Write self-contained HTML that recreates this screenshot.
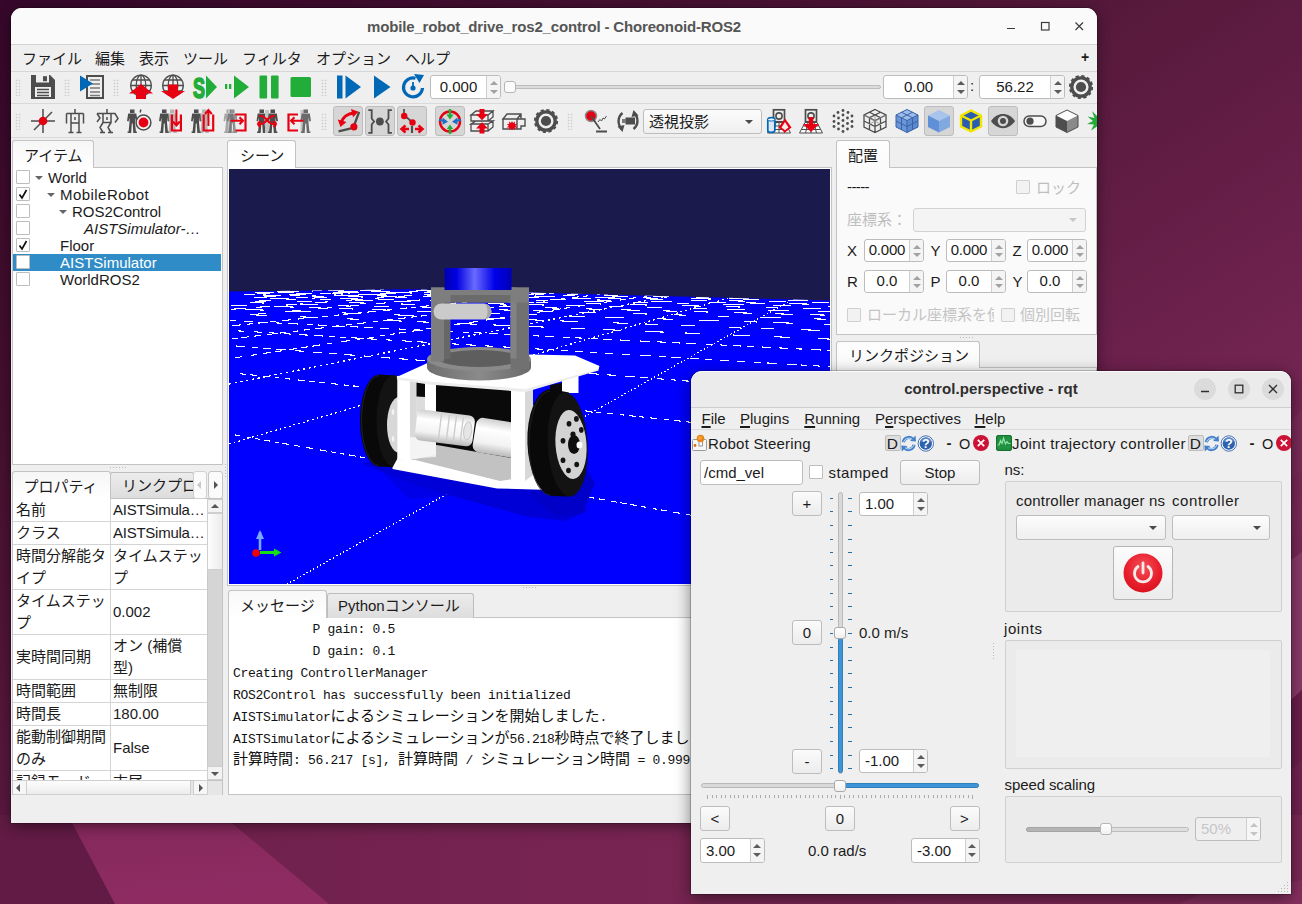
<!DOCTYPE html>
<html lang="ja"><head><meta charset="utf-8"><title>mobile_robot_drive_ros2_control - Choreonoid-ROS2</title>
<style>
*{box-sizing:border-box;margin:0;padding:0}
html,body{width:1302px;height:904px;overflow:hidden;background:#4a1535}
body{position:relative;font-family:"Liberation Sans","Noto Sans CJK JP",sans-serif;font-size:15px;color:#1b1b1b}
.a{position:absolute}
.t{position:absolute;white-space:nowrap;line-height:20px;height:20px;font-size:15px}
.j{font-family:"Liberation Sans","Noto Sans CJK JP",sans-serif}
.win{position:absolute;overflow:hidden}
.tab{position:absolute;border:1px solid #c3c3c3;border-bottom:none;border-radius:3px 3px 0 0;background:#fafafa}
.tabi{position:absolute;border:1px solid #bdbdbd;border-bottom:none;border-radius:3px 3px 0 0;background:linear-gradient(#ececec,#dddddd)}
.pane{position:absolute;border:1px solid #c3c3c3;background:#fff}
.cb{position:absolute;width:14px;height:14px;border:1px solid #bdbdbd;background:#fff;border-radius:1px}
.sp{position:absolute;border:1px solid #bcbcbc;border-radius:3px;background:#fff;overflow:hidden}
.sp .b{position:absolute;right:0;top:0;bottom:0;width:14px;border-left:1px solid #cfcfcf;background:#f4f4f4}
.sp .b:before{content:"";position:absolute;left:2.500px;top:calc(50% - 6px);border:4px solid transparent;border-top:none;border-bottom:4px solid #5c5c5c}
.sp .b:after{content:"";position:absolute;left:2.500px;top:calc(50% + 2.500px);border:4px solid transparent;border-bottom:none;border-top:4px solid #5c5c5c}
.sp.l .b:before{border-bottom-color:#a2a2a2}.sp.l .b:after{border-top-color:#a2a2a2}
.sp.d .b:before{border-bottom-color:#c4c4c4}.sp.d .b:after{border-top-color:#c4c4c4}
.sp span{position:absolute;left:0;top:0;bottom:0;right:14px;text-align:center;font-size:15px;line-height:22px;white-space:nowrap}
.btn{position:absolute;border:1px solid #bdbdbd;border-radius:3px;background:linear-gradient(#fbfbfb,#ececec);text-align:center;font-size:15px;white-space:nowrap}
.tog{position:absolute;border:1px solid #bdbdbd;border-radius:3px;background:#d6d6d6}
.hd{position:absolute;width:6px;background-image:radial-gradient(circle,#d0d0d0 0.8px,transparent 1.1px);background-size:3px 3px}
.gb{position:absolute;border:1px solid #d0d0d0;background:#ebebeb;border-radius:2px}
.cmb{position:absolute;border:1px solid #bdbdbd;border-radius:3px;background:linear-gradient(#fcfcfc,#efefef)}
.cmb:after{content:"";position:absolute;right:8px;top:calc(50% - 2px);border:4px solid transparent;border-bottom:none;border-top:4px solid #4a4a4a}
u{text-decoration:underline;text-underline-offset:2px;text-decoration-thickness:1.500px}
.cmb.dis:after{border-top-color:#c6c6c6}
</style></head><body>
<!-- desktop wallpaper -->
<svg class="a" style="left:0;top:0" width="1302" height="904" viewBox="0 0 1302 904">
<defs>
<linearGradient id="bgT" x1="0" y1="0" x2="1" y2="0"><stop offset="0" stop-color="#36072a"/><stop offset=".5" stop-color="#451031"/><stop offset=".85" stop-color="#541839"/><stop offset="1" stop-color="#581a3c"/></linearGradient>
<linearGradient id="bgL" x1="0" y1="0" x2="0" y2="1"><stop offset="0" stop-color="#36072a"/><stop offset=".5" stop-color="#47102f"/><stop offset="1" stop-color="#5f1a43"/></linearGradient>
<linearGradient id="bgR" x1="0" y1="0" x2="0.150" y2="1"><stop offset="0" stop-color="#54183a"/><stop offset=".42" stop-color="#6c214c"/><stop offset=".7" stop-color="#7a2a57"/><stop offset="1" stop-color="#702350"/></linearGradient>
<linearGradient id="bgB" x1="0" y1="0" x2="1" y2="0"><stop offset="0" stop-color="#6a1f48"/><stop offset=".35" stop-color="#752350"/><stop offset="1" stop-color="#7c2855"/></linearGradient>
<linearGradient id="bgF" x1="0" y1="0" x2="0.300" y2="1"><stop offset="0" stop-color="#84285a"/><stop offset="1" stop-color="#8e2c62"/></linearGradient>
</defs>
<rect width="1302" height="904" fill="#4a1235"/>
<rect x="0" y="0" width="1302" height="14" fill="url(#bgT)"/>
<rect x="0" y="0" width="14" height="904" fill="url(#bgL)"/>
<rect x="1090" y="0" width="212" height="904" fill="url(#bgR)"/>
<rect x="0" y="815" width="1302" height="89" fill="url(#bgB)"/>
<polygon points="0,815 68,815 115,904 0,904" fill="#611b44"/>
<polygon points="68,815 222,815 329,904 115,904" fill="url(#bgF)"/>
<polygon points="1291,560 1302,552 1302,690 1291,700" fill="#8a3b69"/>
<polygon points="1291,700 1302,690 1302,760 1291,770" fill="#6a1f4a"/>
<polygon points="1291,420 1302,410 1302,470 1291,480" fill="#7a2c58"/>
<polygon points="1200,894 1302,880 1302,904 1180,904" fill="#852f5e"/>
</svg>
<!-- Choreonoid main window -->
<div class="a" style="left:11px;top:8px;width:1086px;height:815px;border-radius:11px 11px 0 0;box-shadow:0 3px 14px rgba(0,0,0,.45),0 0 0 1px rgba(0,0,0,.18)"></div>
<div class="win" id="chor" style="left:11px;top:8px;width:1086px;height:815px;border-radius:11px 11px 0 0;background:#efefef">
<div class="a" style="left:0;top:0;width:1086px;height:37px;background:#fafafa;border-bottom:1px solid #d2d2d2"></div>
<div class="t" style="left:0;width:1086px;top:9px;text-align:center;font-weight:bold;color:#555;letter-spacing:-0.16px">mobile_robot_drive_ros2_control - Choreonoid-ROS2</div>
<svg class="a" style="left:990px;top:8px" width="90" height="24" viewBox="0 0 90 24" fill="none" stroke="#3c3c3c" stroke-width="1.2">
<path d="M6 12.500h8"/><rect x="40.5" y="14.5" width="7.5" height="7.5" transform="translate(0,-8)"/><path d="M74.5 6.500l7.500 7.500M82 6.500l-7.500 7.500"/></svg>
<!-- menubar -->
<div class="a" style="left:0;top:37px;width:1086px;height:27px;background:#efefef;border-bottom:1px solid #d6d6d6"></div>
<div class="t j" style="left:11px;top:41px">ファイル</div>
<div class="t j" style="left:84px;top:41px">編集</div>
<div class="t j" style="left:128px;top:41px">表示</div>
<div class="t j" style="left:172px;top:41px">ツール</div>
<div class="t j" style="left:231px;top:41px">フィルタ</div>
<div class="t j" style="left:305px;top:41px">オプション</div>
<div class="t j" style="left:394px;top:41px">ヘルプ</div>
<div class="t" style="left:1070px;top:39px;font-weight:bold;font-size:14px">+</div>
<!-- toolbars : coordinates relative to window (global-11, global-8) -->
<div class="a" style="left:0;top:95px;width:1086px;height:1px;background:#d9d9d9"></div>
<div class="a" style="left:0;top:129px;width:1086px;height:1px;background:#d9d9d9"></div>
<div class="hd" style="left:4px;top:71px;height:17px"></div>
<div class="hd" style="left:53px;top:71px;height:17px"></div>
<div class="hd" style="left:102px;top:71px;height:17px"></div>
<div class="hd" style="left:310px;top:71px;height:17px"></div>
<div class="hd" style="left:4px;top:105px;height:17px"></div>
<div class="hd" style="left:310px;top:105px;height:17px"></div>
<div class="hd" style="left:556px;top:105px;height:17px"></div>
<!-- toggled buttons -->
<div class="tog" style="left:322px;top:98px;width:30px;height:30px"></div>
<div class="tog" style="left:354px;top:98px;width:30px;height:30px"></div>
<div class="tog" style="left:386px;top:98px;width:30px;height:30px"></div>
<div class="tog" style="left:424px;top:98px;width:30px;height:30px"></div>
<div class="tog" style="left:913px;top:98px;width:30px;height:30px"></div>
<div class="tog" style="left:977px;top:98px;width:30px;height:30px"></div>
<!-- time bar widgets -->
<div class="sp l" style="left:419px;top:67px;width:71px;height:24px"><span>0.000</span><div class="b"></div></div>
<div class="a" style="left:494px;top:77px;width:376px;height:4px;border:1px solid #bdbdbd;border-radius:2px;background:#dcdcdc"></div>
<div class="a" style="left:493px;top:73px;width:12px;height:12px;border:1px solid #b5b5b5;border-radius:3px;background:#fbfbfb"></div>
<div class="sp" style="left:872px;top:67px;width:85px;height:24px"><span>0.00</span><div class="b"></div></div>
<div class="t" style="left:959px;top:68px">:</div>
<div class="sp" style="left:968px;top:67px;width:86px;height:24px"><span>56.22</span><div class="b"></div></div>
<div class="cmb" style="left:632px;top:101px;width:119px;height:25px"><div class="t j" style="left:5px;top:2px">透視投影</div></div>
<svg class="a" style="left:0;top:64px" width="1086" height="68" viewBox="0 0 1086 68">
<defs>
<g id="rb"><path d="M3 .500h4.500v3.600h-4.500zM1.200 4.600h8.100l1.200 7.500-1.600.400-.900-4v5l.900 9h1v1.500h-3.600l-.600-9.500h-.900l-.600 9.500h-3.600v-1.500h1l.900-9v-5l-.900 4-1.600-.400z"/></g>
<g id="globe" fill="none" stroke="#4d4d4d" stroke-width="1.300"><circle cx="12" cy="10.500" r="10.300"/><ellipse cx="12" cy="10.500" rx="4.800" ry="10.300"/><path d="M12 .200v20M1.700 10.500h20.600M3.500 5h17M3.500 16h17"/></g>
<g id="gear"><circle cx="12" cy="12" r="9.200" fill="none" stroke="#4d4d4d" stroke-width="3.300"/><circle cx="12" cy="12" r="11.200" fill="none" stroke="#4d4d4d" stroke-width="1.800" stroke-dasharray="3.200 2.664"/><circle cx="12" cy="12" r="5.100" fill="#4d4d4d"/></g>
</defs>
<!-- row 1 -->
<g transform="translate(20,3)"><path d="M0 0h19l5 5v19h-24z" fill="#4d4d4d"/><rect x="5" y="0" width="13" height="7.500" fill="#efefef"/><rect x="12" y="1.200" width="4" height="5" fill="#4d4d4d"/><rect x="4" y="12" width="16" height="10" fill="#efefef"/><path d="M6 14.500h12M6 17.500h12M6 20.500h12" stroke="#4d4d4d" stroke-width="1.500"/></g>
<g transform="translate(69,3)"><rect x="7" y="1" width="16" height="22" fill="#efefef" stroke="#4d4d4d" stroke-width="2"/><path d="M10 5h10M10 9h10M10 13h10M10 17h10M10 20.500h10" stroke="#7a7a7a" stroke-width="1.300"/><path d="M0 0.500l13 8-13 8z" fill="#0068b7"/></g>
<g transform="translate(118,3)"><use href="#globe"/><path d="M12 9l12 9.500h-7v5.500h-10v-5.500h-7z" fill="#e60012"/></g>
<g transform="translate(150,3)"><use href="#globe"/><path d="M7 9.500h10v6.500h7l-12 8-12-8h7z" fill="#e60012"/></g>
<g transform="translate(182,3)" fill="#22ac38"><text x="0" y="22.500" font-family="Liberation Sans,sans-serif" font-weight="bold" font-size="29" transform="scale(.62,1)" stroke="#22ac38" stroke-width="1.700">S</text><path d="M13 0.500l11 11.500-11 11.500z"/></g>
<g transform="translate(214,3)" fill="#22ac38"><rect x="0" y="9" width="2.300" height="5"/><rect x="4" y="9" width="2.300" height="5"/><path d="M9 0.500l15 11.500-15 11.500z"/></g>
<g transform="translate(246,3)" fill="#22ac38"><rect x="2.500" y="0.500" width="7.600" height="23" rx="1"/><rect x="14" y="0.500" width="7.600" height="23" rx="1"/></g>
<g transform="translate(278,3)" fill="#22ac38"><rect x="1.500" y="2" width="20.500" height="20" rx="1.500"/></g>
<g transform="translate(326,3)" fill="#0068b7"><rect x="0" y="0.500" width="5.500" height="23"/><path d="M8.500 0.500l15.500 11.500-15.500 11.500z"/></g>
<g transform="translate(358,3)" fill="#0068b7"><path d="M5 0.500l16.500 11.500-16.500 11.500z"/></g>
<g transform="translate(390,3)"><path d="M14.500 3.200A9.500 9.500 0 1 0 21.500 13" fill="none" stroke="#0068b7" stroke-width="3.200"/><path d="M13 -1l10 1-4.500 8z" fill="#0068b7"/><circle cx="12" cy="13" r="2.600" fill="#0068b7"/><path d="M12 13v-6" stroke="#0068b7" stroke-width="1.800"/></g>
<g transform="translate(1058,3)"><use href="#gear"/></g>
<!-- row 2 -->
<g transform="translate(20,37)"><path d="M12 0v24M0 12h24M3 21l18-18" stroke="#4d4d4d" stroke-width="1.500"/><circle cx="12" cy="12" r="4.300" fill="#e60012"/></g>
<g transform="translate(52,37)" fill="none" stroke="#4d4d4d" stroke-width="1.500"><path d="M12 0v4M3.500 4.500h17M3.500 4.500v10M20.500 4.500v10M8 4.500v9.500h8v-9.500M12 8v3M8 14v9M16 14v9M5.500 23.500h5M13.500 23.500h5"/></g>
<g transform="translate(84,37)" fill="none" stroke="#4d4d4d" stroke-width="1.500"><path d="M12 0v4M2 4.500h18l3 5-3 4M2 4.500l3 4.500-3 4M8 4.500v9h8v-9M12 8v3M8 13.500l-3 5 3 5M16 13.500l-3 5 3 5M5 23.500h5M13 23.500h5"/></g>
<g transform="translate(116,37)"><use href="#rb" fill="#4d4d4d"/><path d="M13.200 3.500l.600-3" stroke="#4d4d4d" stroke-width="1.500"/><circle cx="16.500" cy="13.500" r="7.400" fill="#f4f4f4" stroke="#4d4d4d" stroke-width="1.500"/><circle cx="16.500" cy="13.500" r="4.900" fill="#e60012"/></g>
<g transform="translate(148,37)"><use href="#rb" fill="#4d4d4d"/><use href="#rb" x="8" fill="#7a7a7a" opacity=".5"/><path d="M12.900 5.500v16h9v-16" fill="none" stroke="#e60012" stroke-width="2.200"/><path d="M17.400 .600v15M14 12.500l3.400 4 3.400-4" fill="none" stroke="#e60012" stroke-width="2"/></g>
<g transform="translate(180,37)"><use href="#rb" fill="#4d4d4d"/><use href="#rb" x="8" fill="#7a7a7a" opacity=".5"/><path d="M12.700 5.500v16h9.500v-16" fill="none" stroke="#e60012" stroke-width="2.200"/><path d="M17.400 17v-15.500M14 5l3.400-4 3.400 4" fill="none" stroke="#e60012" stroke-width="2"/></g>
<g transform="translate(212,37)"><use href="#rb" x=".500" fill="#a6a6a6"/><rect x="5" y="1" width="2.600" height="23" fill="#c4c4c4"/><use href="#rb" x="4" fill="#5a5a5a" opacity=".65"/><path d="M12.500 5.500h10v16h-10" fill="none" stroke="#e60012" stroke-width="2.200"/><path d="M7.500 11.800h12M16.500 8.300l3.500 3.500-3.500 3.500" fill="none" stroke="#e60012" stroke-width="2"/></g>
<g transform="translate(244,37)"><use href="#rb" x="1.500" fill="#4d4d4d"/><rect x="10" y="1" width="4" height="23" fill="#c4c4c4"/><use href="#rb" x="12.500" fill="#4d4d4d"/><path d="M3 15h3c5 0 7-8 12-8h2M21 15h-3c-5 0-7-8-12-8h-2M2.500 15l3-3M2.500 15l3 3M21.500 15l-3-3M21.500 15l-3 3" fill="none" stroke="#e60012" stroke-width="2"/></g>
<g transform="translate(276,37)"><rect x="13.500" y="1" width="3" height="23" fill="#c4c4c4"/><use href="#rb" x="13.500" fill="#6a6a6a"/><path d="M11 5.500h-9.500v16h9.500" fill="none" stroke="#e60012" stroke-width="2.200"/><path d="M16.500 11.800h-12M7.500 8.300l-3.500 3.500 3.500 3.500" fill="none" stroke="#e60012" stroke-width="2"/></g>
<!-- toggles -->
<g transform="translate(325,37)"><path d="M2.600 22.400l12.400-3.100M18.300 16l4.800-13.200" stroke="#4d4d4d" stroke-width="2.300" fill="none"/><path d="M5 14.500c1.500-6.500 7-10 13-10.500" fill="none" stroke="#e60012" stroke-width="2.900"/><path d="M1.800 10.500l2.700 7.500 6-5zM15 0l7.500 2.800-5.500 5.500z" fill="#e60012"/><circle cx="17.900" cy="17.800" r="3.600" fill="#e60012"/></g>
<g transform="translate(357,37)" fill="none" stroke="#4d4d4d" stroke-width="1.800"><path d="M0.300 1.200h3.400v8.300l2.400 3-2.400 3v8.300h-3.400M23.900 1.200h-3.400v8.300l-2.400 3 2.400 3v8.300h3.400"/><circle cx="11.900" cy="12.500" r="3.900" fill="#4d4d4d" stroke="none"/></g>
<g transform="translate(389,37)"><path d="M4 0v6l8 7" fill="none" stroke="#4d4d4d" stroke-width="1.700"/><path d="M12 17v7" stroke="#4d4d4d" stroke-width="2.200"/><circle cx="4.200" cy="7" r="3.200" fill="#e60012"/><circle cx="12.500" cy="13.500" r="3.200" fill="#e60012"/><path d="M2 20h7M5.500 16.500l-4 3.500 4 3.500M15 20h7M18.500 16.500l4 3.500-4 3.500" fill="none" stroke="#e60012" stroke-width="2.500"/></g>
<g transform="translate(427,37)"><circle cx="12" cy="12.500" r="10" fill="none" stroke="#e60012" stroke-width="2.400"/><path d="M12 0v7M12 25v-5" fill="none" stroke="#22ac38" stroke-width="2.400"/><path d="M8.300 5.500h7.400l-3.700 5zM8.800 20h6.400l-3.200-4.500z" fill="#22ac38"/><path d="M1 10.800l5 1.200M23 10.800l-5 1.200" fill="none" stroke="#1f6fc4" stroke-width="2.200"/><path d="M4.500 8.500l5.500 4.200-5.500 3zM19.500 8.500l-5.500 4.200 5.500 3z" fill="#1f6fc4"/></g>
<g transform="translate(459,37)"><path d="M1 6l5-4h17l-5 4zM1 6h17v6h-17zM18 6l5-4v6l-5 4M1 15l5-3h17l-5 3zM1 15h17v7h-17zM18 15l5-3v6l-5 4" fill="#efefef" stroke="#4d4d4d" stroke-width="1.300"/><path d="M9.500 0h5v5h3.500l-6 6.200-6-6.200h3.500zM9.500 24.500h5v-5h3.500l-6-6.200-6 6.200h3.500z" fill="#e60012"/></g>
<g transform="translate(491,37)"><path d="M1 10l4-5h14v5zM1 10h14v10h-14zM15 10h8v7h-4v3h-4M15 10l4-5" fill="#efefef" stroke="#4d4d4d" stroke-width="1.400"/><path d="M8 11l1 2 2-1.500-.200 2.500 2.500.200-2 1.600 2 1.600-2.500.200.200 2.500-2-1.500-1 2-1-2-2 1.500.200-2.500-2.500-.200 2-1.600-2-1.600 2.500-.200-.200-2.500 2 1.500z" fill="#e60012" transform="translate(2,1)"/></g>
<g transform="translate(523,37)"><use href="#gear"/></g>
<g transform="translate(573,37)"><circle cx="7" cy="7" r="5.500" fill="#e60012" stroke="#8a8a8a" stroke-width="1.500"/><path d="M7 7l9 13M12 22.500h11" stroke="#4d4d4d" stroke-width="1.800" fill="none"/><path d="M14 13l2-2.500 1.500 1.500 1.500-3 1.500 1 2-3" stroke="#4d4d4d" stroke-width="1" fill="none"/></g>
<g transform="translate(605,37)"><path d="M6.500 4A10.500 10.500 0 0 0 6 20M17.500 20A10.500 10.500 0 0 0 18 4" fill="none" stroke="#4d4d4d" stroke-width="2.400"/><path d="M1.500 17.500l5 5.500 2-7zM22.500 6.500l-5-5.500-2 7z" fill="#4d4d4d"/><rect x="9.500" y="8.500" width="9.500" height="7" fill="#4d4d4d"/><rect x="6" y="10" width="4" height="4" fill="#7a7a7a"/></g>
<!-- right group -->
<g transform="translate(756,37)"><rect x="6.500" y="0.800" width="11" height="12" fill="#efefef" stroke="#4d4d4d" stroke-width="1.700"/><circle cx="12" cy="7" r="3.100" fill="none" stroke="#4d4d4d" stroke-width="1.600"/><path d="M6 13.500l-5.500 10.500h23l-5.500-10.500z" fill="#fafafa" stroke="#4d4d4d" stroke-width="1"/><path d="M4.300 17h15.400M2.600 20.500h18.800M9 13.500l-2.500 10.500M12 13.500v10.500M15 13.500l2.500 10.500" stroke="#4d4d4d" stroke-width="1" fill="none"/><path d="M0.800 10.500c0-2.500 7-2.500 7 0v11c0 2.500-7 2.500-7 0z" fill="#dfe8f2" stroke="#0068b7" stroke-width="1.700"/><ellipse cx="4.300" cy="10.500" rx="3.500" ry="1.600" fill="#f4f8fc" stroke="#0068b7" stroke-width="1"/><path d="M18 9.500l6.500 9-6.500 5-6.500-5z" fill="#e60012"/><path d="M18 13l3.500 5.500-3.500 2.800-3.500-2.800z" fill="#f6eaea"/></g>
<g transform="translate(788,37)"><rect x="6.500" y="0.800" width="11" height="12" fill="#efefef" stroke="#4d4d4d" stroke-width="1.700"/><circle cx="12" cy="7" r="3.100" fill="none" stroke="#4d4d4d" stroke-width="1.600"/><path d="M6 13.500l-5.500 10.500h23l-5.500-10.500z" fill="#fafafa" stroke="#4d4d4d" stroke-width="1"/><path d="M4.300 17h15.400M2.600 20.500h18.800M9 13.500l-2.500 10.500M12 13.500v10.500M15 13.500l2.500 10.500" stroke="#4d4d4d" stroke-width="1" fill="none"/><path d="M9.800 8h4.400v7h5.800l-8 8-8-8h5.800z" fill="#e60012"/></g>
<g transform="translate(820,37)" fill="#4d4d4d"><circle cx="12" cy="1.500" r="1.400"/><circle cx="7" cy="3.500" r="1.400"/><circle cx="17" cy="3.500" r="1.400"/><circle cx="12" cy="6" r="1.400"/><circle cx="3" cy="7" r="1.400"/><circle cx="21" cy="7" r="1.400"/><circle cx="7.500" cy="9" r="1.400"/><circle cx="16.500" cy="9" r="1.400"/><circle cx="12" cy="11.500" r="1.400"/><circle cx="3" cy="12.500" r="1.400"/><circle cx="21" cy="12.500" r="1.400"/><circle cx="7.500" cy="14.500" r="1.400"/><circle cx="16.500" cy="14.500" r="1.400"/><circle cx="12" cy="17" r="1.400"/><circle cx="3" cy="17.500" r="1.400"/><circle cx="21" cy="17.500" r="1.400"/><circle cx="7.500" cy="20" r="1.400"/><circle cx="16.500" cy="20" r="1.400"/><circle cx="12" cy="22.500" r="1.400"/></g>
<g transform="translate(852,37)" fill="none" stroke="#4d4d4d" stroke-width="1.300"><path d="M12 .500l11 5.500v12l-11 5.500-11-5.500v-12zM1 6l11 5.500 11-5.500M12 11.500v12M1 12l11 5.500 11-5.500M6.500 3.250l11 5.500v12M17.500 3.250l-11 5.500v12"/><path d="M12 6v12M6.500 9.500l11 5.500M17.500 9.500l-11 5.500M1 6l11 5.500M23 6l-11 5.500" stroke-width=".7" stroke="#8a8a8a"/></g>
<g transform="translate(884,37)"><path d="M12 .500l11 5.500v12l-11 5.500-11-5.500v-12z" fill="#6a96d8"/><path d="M12 .500l11 5.500-11 5.500-11-5.500z" fill="#9dbcea"/><path d="M12 11.500l11-5.500v12l-11 5.500z" fill="#5b8ad0"/><path d="M12 .500l11 5.500v12l-11 5.500-11-5.500v-12zM1 6l11 5.500 11-5.500M12 11.500v12M1 12l11 5.500 11-5.500M6.500 3.250l11 5.500v12M17.500 3.250l-11 5.500v12" fill="none" stroke="#3a62a6" stroke-width="1"/></g>
<g transform="translate(916,37)"><path d="M12 1l11 5.500-11 5.500-11-5.500z" fill="#a9c4ec"/><path d="M1 6.500l11 5.500v11.500l-11-5.500z" fill="#5f8fd6"/><path d="M23 6.500l-11 5.500v11.500l11-5.500z" fill="#82a8e0"/></g>
<g transform="translate(948,37)"><path d="M12 1.500l10 5v11l-10 5-10-5v-11z" fill="#2a5db0" stroke="#f2e500" stroke-width="2.400" stroke-linejoin="round"/><path d="M2 6.500l10 5 10-5M12 11.500v11" fill="none" stroke="#f2e500" stroke-width="2.400"/></g>
<g transform="translate(980,37)"><path d="M0 12c6-9.500 18-9.500 24 0c-6 9.500-18 9.500-24 0z" fill="#4d4d4d"/><circle cx="12" cy="12" r="5.300" fill="#d6d6d6"/><circle cx="12" cy="12" r="3" fill="#4d4d4d"/></g>
<g transform="translate(1012,37)"><rect x="1" y="7" width="22" height="10.500" rx="5.250" fill="#f8f8f8" stroke="#4d4d4d" stroke-width="1.500"/><circle cx="7" cy="12.200" r="3.600" fill="#4d4d4d"/></g>
<g transform="translate(1044,37)"><path d="M12 1l11 5.500-11 5.500-11-5.500z" fill="#fdfdfd"/><path d="M1 6.500l11 5.500v11.500l-11-5.500z" fill="#4d4d4d"/><path d="M23 6.500l-11 5.500v11.500l11-5.500z" fill="#8a8a8a"/><path d="M12 1l11 5.500v11.500l-11 5.500-11-5.500v-11.500z" fill="none" stroke="#4d4d4d" stroke-width="1"/></g>
<g transform="translate(1076,37)"><path d="M12 0l2 7 5-5-2.500 7 7-1.500-5.500 4.500 6 3-7 .500 3 6-6-4-2 7-2-7-6 4 3-6-7-.500 6-3-5.500-4.500 7 1.500-2.500-7 5 5z" fill="#22ac38"/></g>
</svg>
<!-- item tree -->
<div class="pane" style="left:1px;top:159px;width:211px;height:298px"></div>
<div class="tab" style="left:1px;top:132px;width:82px;height:28px;background:linear-gradient(#f6f6f6,#fff)"></div>
<div class="t j" style="left:13px;top:138px">アイテム</div>
<div class="cb" style="left:5px;top:162px"></div>
<div class="a" style="left:24px;top:168px;border:4px solid transparent;border-bottom:none;border-top:4.500px solid #666"></div>
<div class="t" style="left:37px;top:159.5px;">World</div>
<div class="cb" style="left:5px;top:179px"><svg width="12" height="12" viewBox="0 0 12 12" style="position:absolute;left:0;top:0"><path d="M2.500 6.500l2.500 3.500 4.500-8" fill="none" stroke="#111" stroke-width="1.700"/></svg></div>
<div class="a" style="left:36px;top:185px;border:4px solid transparent;border-bottom:none;border-top:4.500px solid #666"></div>
<div class="t" style="left:49px;top:176.5px;letter-spacing:0.45px">MobileRobot</div>
<div class="cb" style="left:5px;top:196px"></div>
<div class="a" style="left:48px;top:202px;border:4px solid transparent;border-bottom:none;border-top:4.500px solid #666"></div>
<div class="t" style="left:61px;top:193.5px;">ROS2Control</div>
<div class="cb" style="left:5px;top:213px"></div>
<div class="t" style="left:73px;top:210.5px;font-style:italic;">AISTSimulator-…</div>
<div class="cb" style="left:5px;top:230px"><svg width="12" height="12" viewBox="0 0 12 12" style="position:absolute;left:0;top:0"><path d="M2.500 6.500l2.500 3.500 4.500-8" fill="none" stroke="#111" stroke-width="1.700"/></svg></div>
<div class="t" style="left:49px;top:227.5px;">Floor</div>
<div class="a" style="left:2px;top:246px;width:208px;height:17px;background:#308cc6"></div>
<div class="cb" style="left:5px;top:247px"></div>
<div class="t" style="left:49px;top:244.5px;color:#fff;">AISTSimulator</div>
<div class="cb" style="left:5px;top:264px"></div>
<div class="t" style="left:49px;top:261.5px;">WorldROS2</div>
<div class="a" style="left:99px;top:459px;width:18px;height:1px;background-image:linear-gradient(90deg,#bbb 1px,transparent 1px);background-size:3px 1px"></div>
<div class="a" style="left:214px;top:456px;width:1px;height:14px;background-image:linear-gradient(#bbb 1px,transparent 1px);background-size:1px 3px"></div>
<!-- property view -->
<div class="pane" style="left:1px;top:490px;width:211px;height:297px;background:#fff"></div>
<div class="tabi" style="left:99px;top:464px;width:84px;height:26px"></div>
<div class="tab" style="left:1px;top:463px;width:98.500px;height:28px;background:linear-gradient(#f6f6f6,#fff)"></div>
<div class="t j" style="left:12.500px;top:468.500px">プロパティ</div>
<div class="t j" style="left:111px;top:468px;width:71px;overflow:hidden">リンクプロパティ</div>
<div class="btn" style="left:182px;top:462.500px;width:14px;height:28px;background:#fbfbfb;border-color:#d0d0d0"><div class="a" style="left:3px;top:9px;border:4px solid transparent;border-left:none;border-right:4px solid #c9c9c9"></div></div>
<div class="btn" style="left:197px;top:462.500px;width:14.500px;height:28px;background:#fbfbfb;border-color:#c4c4c4"><div class="a" style="left:5px;top:9px;border:4px solid transparent;border-right:none;border-left:4px solid #555"></div></div>
<div class="a" style="left:2px;top:491px;width:194px;height:281px;overflow:hidden">
<div class="a" style="left:0;top:0px;width:194px;height:23px;border-bottom:1px solid #d4d4d4"></div>
<div class="a j" style="left:3px;top:0.0px;width:96px;line-height:22px;white-space:nowrap;overflow:hidden">名前</div>
<div class="a j" style="left:100px;top:0.0px;width:94px;line-height:22px;white-space:nowrap;overflow:hidden;letter-spacing:-0.25px">AISTSimula…</div>
<div class="a" style="left:0;top:22.5px;width:194px;height:23px;border-bottom:1px solid #d4d4d4"></div>
<div class="a j" style="left:3px;top:22.5px;width:96px;line-height:22px;white-space:nowrap;overflow:hidden">クラス</div>
<div class="a j" style="left:100px;top:22.5px;width:94px;line-height:22px;white-space:nowrap;overflow:hidden;letter-spacing:-0.25px">AISTSimula…</div>
<div class="a" style="left:0;top:45.5px;width:194px;height:45px;border-bottom:1px solid #d4d4d4"></div>
<div class="a j" style="left:3px;top:45.5px;width:96px;line-height:22px;white-space:nowrap;overflow:hidden">時間分解能タ<br>イプ</div>
<div class="a j" style="left:100px;top:45.5px;width:94px;line-height:22px;white-space:nowrap;overflow:hidden">タイムステッ<br>プ</div>
<div class="a" style="left:0;top:90.5px;width:194px;height:45px;border-bottom:1px solid #d4d4d4"></div>
<div class="a j" style="left:3px;top:90.5px;width:96px;line-height:22px;white-space:nowrap;overflow:hidden">タイムステッ<br>プ</div>
<div class="a j" style="left:100px;top:101.5px;width:94px;line-height:22px;white-space:nowrap;overflow:hidden">0.002</div>
<div class="a" style="left:0;top:135.5px;width:194px;height:45px;border-bottom:1px solid #d4d4d4"></div>
<div class="a j" style="left:3px;top:146.5px;width:96px;line-height:22px;white-space:nowrap;overflow:hidden">実時間同期</div>
<div class="a j" style="left:100px;top:135.5px;width:94px;line-height:22px;white-space:nowrap;overflow:hidden">オン (補償<br>型)</div>
<div class="a" style="left:0;top:180.5px;width:194px;height:23px;border-bottom:1px solid #d4d4d4"></div>
<div class="a j" style="left:3px;top:180.5px;width:96px;line-height:22px;white-space:nowrap;overflow:hidden">時間範囲</div>
<div class="a j" style="left:100px;top:180.5px;width:94px;line-height:22px;white-space:nowrap;overflow:hidden">無制限</div>
<div class="a" style="left:0;top:203.5px;width:194px;height:23px;border-bottom:1px solid #d4d4d4"></div>
<div class="a j" style="left:3px;top:203.5px;width:96px;line-height:22px;white-space:nowrap;overflow:hidden">時間長</div>
<div class="a j" style="left:100px;top:203.5px;width:94px;line-height:22px;white-space:nowrap;overflow:hidden">180.00</div>
<div class="a" style="left:0;top:226.5px;width:194px;height:45px;border-bottom:1px solid #d4d4d4"></div>
<div class="a j" style="left:3px;top:226.5px;width:96px;line-height:22px;white-space:nowrap;overflow:hidden">能動制御期間<br>のみ</div>
<div class="a j" style="left:100px;top:237.5px;width:94px;line-height:22px;white-space:nowrap;overflow:hidden">False</div>
<div class="a" style="left:0;top:271.5px;width:194px;height:23px;border-bottom:1px solid #d4d4d4"></div>
<div class="a j" style="left:3px;top:271.5px;width:96px;line-height:22px;white-space:nowrap;overflow:hidden">記録モード</div>
<div class="a j" style="left:100px;top:271.5px;width:94px;line-height:22px;white-space:nowrap;overflow:hidden">末尾</div>
<div class="a" style="left:96.500px;top:0;width:1px;height:281px;background:#d4d4d4"></div>
</div>
<div class="a" style="left:196px;top:491px;width:15px;height:281px;background:#d5d5d5;border-left:1px solid #c8c8c8"></div>
<div class="a" style="left:196px;top:491px;width:15px;height:14px;background:#f3f3f3;border:1px solid #cfcfcf;border-right:none"><div class="a" style="left:3px;top:3.500px;border:4px solid transparent;border-top:none;border-bottom:4.500px solid #555"></div></div>
<div class="a" style="left:196px;top:505px;width:15px;height:57px;background:linear-gradient(90deg,#fdfdfd,#ececec);border:1px solid #cfcfcf;border-right:none"></div>
<div class="a" style="left:196px;top:758px;width:15px;height:14px;background:#f3f3f3;border:1px solid #cfcfcf;border-right:none"><div class="a" style="left:3px;top:4.500px;border:4px solid transparent;border-bottom:none;border-top:4.500px solid #555"></div></div>
<div class="a" style="left:2px;top:772px;width:209px;height:14.500px;background:#e6e6e6;border-top:1px solid #c4c4c4"></div>
<div class="a" style="left:2px;top:772px;width:14px;height:14.500px;background:#f6f6f6;border:1px solid #cfcfcf;border-left:none"><div class="a" style="left:3px;top:2.500px;border:4px solid transparent;border-left:none;border-right:4.500px solid #555"></div></div>
<div class="a" style="left:16px;top:772px;width:164px;height:14.500px;background:linear-gradient(#fdfdfd,#ececec);border:1px solid #cfcfcf;border-left:none"></div>
<div class="a" style="left:182px;top:772px;width:14.500px;height:14.500px;background:#f6f6f6;border:1px solid #cfcfcf"><div class="a" style="left:5px;top:2.500px;border:4px solid transparent;border-right:none;border-left:4.500px solid #555"></div></div>
<!-- scene view -->
<div class="pane" style="left:216px;top:159px;width:605px;height:419px;background:#fff"></div>
<div class="tab" style="left:216px;top:132px;width:69px;height:28px;background:linear-gradient(#fdfdfd,#fff)"></div>
<div class="t j" style="left:229px;top:138px">シーン</div>
<svg class="a" style="left:218px;top:161px" width="601" height="415" viewBox="0 0 601 415">
<defs><linearGradient id="cyl" x1="0" x2="1"><stop offset="0" stop-color="#0000b0"/><stop offset=".18" stop-color="#0000e0"/><stop offset=".45" stop-color="#6a6aff"/><stop offset=".75" stop-color="#0000e8"/><stop offset="1" stop-color="#0000b8"/></linearGradient>
<linearGradient id="mot" x1="0" y1="0" x2="0" y2="1"><stop offset="0" stop-color="#cfcfcf"/><stop offset=".3" stop-color="#ffffff"/><stop offset=".7" stop-color="#f2f2f2"/><stop offset="1" stop-color="#b8b8b8"/></linearGradient>
<linearGradient id="ring" x1="0" x2="1"><stop offset="0" stop-color="#6e6e6e"/><stop offset=".5" stop-color="#8a8a8a"/><stop offset="1" stop-color="#6a6a6a"/></linearGradient>
<clipPath id="flc"><polygon points="0.0,122.5 181.0,120.3 601.0,131.5 601.0,415.0 0.0,415.0"/></clipPath></defs>
<rect width="601" height="415" fill="#1a1a4c"/>
<polygon points="0.0,122.5 181.0,120.3 601.0,131.5 601.0,415.0 0.0,415.0" fill="#0000ff"/>
<path d="M5.8 188.8L13.0 187.7M21.5 186.4L28.3 185.4M34.5 184.5L41.8 183.4M46.4 182.7L53.3 181.7M60.3 180.6L68.4 179.4M72.5 178.8L78.6 177.9M82.6 177.3L90.8 176.0M98.1 175.0L103.1 174.2M111.9 172.9L120.8 171.5M127.8 170.5L135.2 169.4M139.6 168.7L144.5 168.0M150.9 167.0L156.0 166.3M160.6 165.6L166.4 164.7M170.2 164.1L176.9 163.1M182.8 162.2L191.2 161.0M197.5 160.0L205.0 158.9M211.2 158.0L218.8 156.8M224.8 155.9L230.8 155.0M239.7 153.7L248.7 152.4M256.8 151.1L264.6 150.0M269.8 149.2L275.6 148.3M280.7 147.6L285.8 146.8M293.5 145.6L300.0 144.7M308.1 143.4L314.5 142.5M323.2 141.2L331.6 139.9M335.1 139.4L340.9 138.5M349.3 137.3L356.1 136.2M364.9 134.9L371.4 134.0M375.3 133.4L382.8 132.2M390.5 131.1L396.5 130.2M400.5 129.6L406.7 128.6M415.4 127.3L420.0 126.7M3.2 169.8L8.5 169.2M12.4 168.7L20.5 167.7M25.1 167.2L32.3 166.3M38.2 165.6L43.9 164.9M51.4 164.0L56.8 163.4M63.8 162.5L69.2 161.9M75.0 161.1L80.8 160.5M85.8 159.8L94.7 158.8M102.6 157.8L108.7 157.1M117.0 156.1L122.8 155.4M128.5 154.7L136.9 153.7M143.9 152.8L149.2 152.2M158.1 151.1L163.8 150.4M168.8 149.8L176.9 148.8M182.2 148.2L188.3 147.4M192.3 147.0L197.5 146.3M204.2 145.5L210.1 144.8M216.9 144.0L223.3 143.2M229.3 142.5L238.2 141.4M244.3 140.7L251.6 139.8M259.8 138.8L265.4 138.1M269.8 137.6L278.5 136.5M286.4 135.6L292.4 134.8M296.9 134.3L304.9 133.3M313.5 132.3L319.2 131.6M327.9 130.5L336.4 129.5M343.2 128.7L349.8 127.9M354.0 127.4L359.0 126.8M367.7 125.7L371.0 125.3M3.3 156.7L11.6 155.9M18.4 155.2L24.5 154.6M29.1 154.1L36.9 153.3M40.9 152.9L46.7 152.3M53.3 151.7L61.7 150.8M68.6 150.1L74.7 149.5M83.2 148.6L88.9 148.1M92.6 147.7L98.6 147.1M104.6 146.5L109.7 146.0M114.2 145.5L120.6 144.8M127.3 144.2L132.7 143.6M138.2 143.1L146.8 142.2M155.7 141.3L163.3 140.5M170.6 139.8L177.9 139.0M182.2 138.6L187.3 138.1M190.9 137.7L199.6 136.8M207.0 136.1L215.9 135.2M219.6 134.8L227.1 134.0M233.3 133.4L241.2 132.6M246.5 132.1L255.5 131.2M259.5 130.7L266.7 130.0M274.2 129.3L282.9 128.4M290.4 127.6L298.2 126.8M306.1 126.0L314.8 125.1M320.2 124.6L325.0 124.1M24.3 145.5L36.6 144.4M56.2 142.7L72.0 141.3M88.6 139.9L102.6 138.6M116.7 137.4L130.3 136.2M147.4 134.7L157.1 133.9M174.7 132.3L191.5 130.9M212.3 129.1L227.0 127.8M241.2 126.5L256.0 125.2M272.7 123.8L282.0 123.0M2.4 140.3L17.3 139.1M27.0 138.4L40.7 137.3M56.7 136.1L67.6 135.3M86.5 133.8L99.5 132.8M117.3 131.4L133.5 130.2M146.4 129.2L155.5 128.5M169.0 127.5L183.3 126.4M195.4 125.5L205.8 124.7M227.7 123.0L241.9 121.9M25.8 133.1L37.4 132.3M56.6 131.0L67.2 130.2M83.0 129.2L98.3 128.1M121.0 126.6L137.0 125.5M152.1 124.4L165.7 123.5M179.8 122.5L189.9 121.9M24.6 128.8L40.3 127.8M60.8 126.6L77.2 125.6M91.2 124.7L101.6 124.1M118.2 123.0L129.4 122.4M142.5 121.6L154.8 120.8M14.8 125.8L26.3 125.2M49.3 123.9L66.1 122.9M83.2 122.0L92.8 121.4M26.6 122.2L27.0 122.2M6.2 266.0L11.4 266.9M17.9 268.0L22.1 268.8M25.6 269.4L31.4 270.4M34.5 270.9L41.5 272.2M45.5 272.9L50.2 273.7M53.3 274.3L59.7 275.4M64.6 276.2L71.0 277.4M76.9 278.4L83.9 279.6M91.1 280.9L97.6 282.1M101.5 282.7L107.3 283.8M111.0 284.4L115.2 285.1M120.3 286.0L126.9 287.2M130.7 287.9L135.8 288.8M140.3 289.6L146.9 290.7M152.1 291.6L158.4 292.8M164.8 293.9L170.3 294.8M176.7 296.0L184.1 297.3M187.4 297.9L194.9 299.2M201.0 300.3L205.6 301.1M210.6 301.9L217.0 303.1M223.9 304.3L229.4 305.2M234.9 306.2L242.1 307.5M248.6 308.6L256.1 309.9M261.1 310.8L267.6 312.0M271.4 312.6L278.1 313.8M284.7 315.0L291.1 316.1M297.3 317.2L302.1 318.0M309.1 319.3L316.7 320.6M324.0 321.9L330.0 323.0M336.5 324.1L341.8 325.0M348.7 326.3L355.9 327.5M360.4 328.3L364.8 329.1M369.8 329.9L375.8 331.0M382.2 332.1L388.1 333.2M391.1 333.7L398.2 334.9M401.4 335.5L408.4 336.7M412.1 337.4L417.4 338.3M423.9 339.5L428.5 340.3M432.1 340.9L438.1 342.0M444.2 343.1L451.3 344.3M457.4 345.4L464.8 346.7M470.0 347.6L477.5 348.9M480.8 349.5L485.7 350.4M491.0 351.3L496.2 352.2M502.4 353.3L508.8 354.4M514.1 355.3L521.2 356.6M526.6 357.6L531.9 358.5M536.5 359.3L543.6 360.6M550.6 361.8L555.5 362.6M562.2 363.8L569.8 365.1M575.0 366.1L581.2 367.2M585.0 367.8L591.1 368.9M596.3 369.8L601.0 370.6M10.6 204.7L16.6 205.3M21.4 205.8L28.4 206.6M33.9 207.2L39.9 207.8M46.0 208.5L50.4 209.0M55.8 209.5L61.4 210.1M68.7 210.9L76.2 211.7M80.3 212.2L86.2 212.8M89.8 213.2L95.5 213.8M102.1 214.5L109.5 215.3M114.6 215.9L120.0 216.4M123.8 216.9L130.2 217.5M137.3 218.3L141.9 218.8M148.4 219.5L152.7 220.0M156.5 220.4L161.5 220.9M167.6 221.6L172.9 222.1M177.5 222.6L183.9 223.3M187.3 223.7L194.1 224.4M197.6 224.8L203.6 225.4M207.7 225.9L212.6 226.4M218.0 227.0L223.7 227.6M228.4 228.1L234.0 228.7M239.4 229.3L244.1 229.8M248.0 230.2L254.5 230.9M260.3 231.5L266.4 232.2M273.2 232.9L279.5 233.6M286.4 234.3L291.4 234.9M297.7 235.6L304.7 236.3M311.8 237.1L317.1 237.7M321.5 238.1L328.9 238.9M332.9 239.4L340.6 240.2M347.6 240.9L352.3 241.4M356.3 241.9L363.1 242.6M367.2 243.1L371.8 243.5M378.5 244.3L384.1 244.9M390.7 245.6L395.3 246.1M400.1 246.6L406.7 247.3M409.8 247.6L414.7 248.2M420.7 248.8L428.1 249.6M435.4 250.4L440.0 250.9M445.3 251.5L452.2 252.2M457.4 252.8L464.0 253.5M467.9 253.9L472.3 254.4M475.7 254.7L480.1 255.2M485.5 255.8L491.5 256.4M497.1 257.0L501.8 257.5M505.6 257.9L510.5 258.5M517.2 259.2L524.9 260.0M532.1 260.8L536.6 261.3M539.8 261.6L547.4 262.4M552.5 263.0L559.4 263.7M563.8 264.2L569.7 264.8M575.0 265.4L580.7 266.0M586.4 266.6L590.6 267.1M596.7 267.7L601.0 268.2M6.8 177.0L15.9 177.8M22.6 178.3L29.2 178.8M34.4 179.2L42.4 179.8M46.7 180.1L56.6 180.9M65.8 181.6L74.7 182.3M84.3 183.1L92.9 183.7M99.7 184.2L108.1 184.9M115.5 185.5L125.8 186.3M135.0 187.0L141.8 187.5M151.7 188.3L160.9 189.0M169.9 189.7L179.4 190.4M186.2 190.9L196.0 191.7M205.8 192.5L214.7 193.2M223.7 193.9L232.9 194.6M239.6 195.1L248.7 195.8M253.3 196.2L260.5 196.7M267.7 197.3L273.3 197.7M279.7 198.2L288.4 198.9M296.5 199.5L303.2 200.0M313.3 200.8L322.1 201.5M328.4 202.0L337.1 202.6M344.9 203.2L353.0 203.9M359.6 204.4L370.0 205.2M378.2 205.8L387.2 206.5M396.1 207.2L406.4 208.0M410.7 208.4L419.3 209.0M428.1 209.7L434.9 210.2M441.6 210.7L447.5 211.2M452.9 211.6L460.2 212.2M465.1 212.6L471.8 213.1M481.7 213.9L489.9 214.5M497.3 215.1L507.5 215.9M515.3 216.5L525.6 217.3M533.8 217.9L543.3 218.6M547.9 219.0L556.4 219.6M565.3 220.3L571.1 220.8M581.2 221.6L587.5 222.1M594.7 222.6L601.0 223.1M9.2 161.9L15.0 162.2M25.2 162.8L32.8 163.3M40.3 163.8L48.7 164.3M55.2 164.7L62.2 165.1M70.5 165.6L78.8 166.1M84.7 166.5L93.8 167.0M99.8 167.4L105.5 167.7M111.2 168.1L117.0 168.4M122.2 168.7L131.4 169.3M138.0 169.7L147.9 170.3M156.8 170.8L162.6 171.2M173.1 171.8L183.2 172.4M187.8 172.7L197.8 173.3M204.6 173.7L212.5 174.2M222.8 174.8L229.6 175.2M237.1 175.7L247.2 176.3M255.9 176.8L263.7 177.3M274.1 177.9L283.6 178.5M291.6 179.0L297.7 179.3M305.8 179.8L313.6 180.3M319.1 180.6L324.9 181.0M332.4 181.5L338.6 181.8M345.6 182.2L354.4 182.8M361.4 183.2L368.3 183.6M376.1 184.1L383.7 184.6M392.8 185.1L400.9 185.6M411.4 186.2L421.6 186.9M430.4 187.4L437.1 187.8M442.0 188.1L451.9 188.7M461.0 189.2L469.6 189.8M476.0 190.1L482.9 190.6M491.4 191.1L499.7 191.6M507.6 192.1L516.3 192.6M525.2 193.1L531.7 193.5M537.5 193.9L547.7 194.5M557.7 195.1L567.5 195.7M571.9 196.0L577.8 196.3M583.7 196.7L591.3 197.1M599.4 197.6L601.0 197.7M1.1 151.6L7.1 151.9M15.5 152.3L23.8 152.8M31.9 153.2L39.3 153.5M46.5 153.9L53.1 154.2M59.5 154.5L68.7 155.0M78.1 155.5L84.1 155.8M89.0 156.0L98.5 156.5M106.6 156.9L115.9 157.3M121.4 157.6L129.1 158.0M134.9 158.3L144.4 158.7M150.9 159.1L159.6 159.5M170.0 160.0L177.2 160.4M184.8 160.8L194.0 161.2M204.0 161.7L211.6 162.1M218.1 162.4L224.2 162.7M233.9 163.2L239.9 163.5M244.6 163.7L252.9 164.1M260.1 164.5L269.0 164.9M275.1 165.2L284.4 165.7M289.1 165.9L295.7 166.3M304.0 166.7L310.0 167.0M316.1 167.3L325.2 167.7M333.8 168.2L340.7 168.5M345.8 168.8L353.1 169.1M361.9 169.6L369.2 169.9M374.2 170.2L383.2 170.6M390.9 171.0L400.9 171.5M411.0 172.0L421.0 172.5M428.0 172.8L437.4 173.3M443.5 173.6L450.6 174.0M457.3 174.3L467.4 174.8M477.2 175.3L484.0 175.6M490.5 175.9L497.8 176.3M504.3 176.6L511.8 177.0M518.4 177.3L525.0 177.7M532.7 178.0L542.1 178.5M549.7 178.9L559.3 179.4M567.1 179.8L573.5 180.1M582.5 180.5L592.3 181.0M598.3 181.3L601.0 181.4M20.9 145.7L37.6 146.4M70.6 147.8L88.0 148.5M117.8 149.8L129.6 150.3M154.2 151.3L172.9 152.1M188.1 152.7L200.1 153.2M228.5 154.4L248.3 155.3M263.5 155.9L280.8 156.6M297.2 157.3L315.5 158.1M342.1 159.2L355.7 159.8M373.6 160.5L392.1 161.3M416.2 162.3L434.7 163.1M456.2 164.0L470.6 164.6M503.7 166.0L521.3 166.8M544.8 167.7L561.1 168.4M589.2 169.6L601.0 170.1M16.1 140.4L35.2 141.1M63.0 142.1L82.4 142.8M113.1 143.9L132.3 144.6M164.8 145.8L185.2 146.6M212.4 147.6L228.6 148.2M257.4 149.2L276.3 149.9M299.0 150.7L314.2 151.3M331.2 151.9L349.5 152.6M384.1 153.8L398.8 154.4M416.3 155.0L429.4 155.5M452.2 156.3L466.2 156.9M500.3 158.1L512.1 158.5M532.4 159.3L544.7 159.7M572.2 160.7L590.8 161.4M2.5 136.1L18.1 136.6M45.0 137.4L64.9 138.1M80.0 138.6L92.2 139.0M110.5 139.5L123.8 140.0M143.2 140.6L161.3 141.2M188.4 142.1L201.8 142.5M220.1 143.1L234.0 143.5M252.0 144.1L270.5 144.7M291.5 145.4L307.9 145.9M339.8 147.0L355.6 147.5M375.6 148.1L395.3 148.7M429.3 149.8L443.7 150.3M469.8 151.2L490.2 151.8M514.9 152.6L528.2 153.0M543.6 153.5L563.9 154.2M595.5 155.2L601.0 155.4M20.9 133.6L34.8 134.0M71.4 135.0L88.9 135.5M108.9 136.1L120.2 136.4M145.5 137.2L160.2 137.6M192.6 138.5L210.7 139.0M238.8 139.9L251.5 140.2M269.7 140.8L284.0 141.2M304.5 141.8L324.1 142.3M350.2 143.1L367.5 143.6M404.3 144.6L418.0 145.0M444.6 145.8L457.3 146.2M489.1 147.1L500.3 147.4M533.2 148.4L552.5 148.9M585.5 149.9L597.5 150.2M29.6 131.3L41.7 131.6M67.8 132.3L83.5 132.7M120.4 133.7L137.3 134.1M171.9 135.0L186.1 135.4M219.2 136.2L234.4 136.6M270.4 137.6L282.5 137.9M316.5 138.8L329.7 139.1M357.2 139.9L373.5 140.3M392.2 140.8L411.4 141.3M433.7 141.9L447.9 142.2M464.8 142.7L478.9 143.0M504.7 143.7L522.8 144.2M546.1 144.8L563.9 145.3M581.5 145.7L596.5 146.1M40.6 129.4L59.8 129.9M90.7 130.6L102.0 130.9M126.4 131.5L144.4 131.9M165.5 132.4L182.2 132.8M208.5 133.5L219.8 133.7M258.6 134.7L277.4 135.1M297.9 135.6L315.0 136.0M337.4 136.5L352.2 136.9M380.4 137.6L394.4 137.9M417.9 138.5L432.9 138.8M464.1 139.6L477.7 139.9M498.0 140.4L516.2 140.8M539.5 141.4L559.8 141.9M588.6 142.6L601.0 142.8M35.3 127.5L47.4 127.8M66.8 128.2L78.9 128.5M111.2 129.2L129.2 129.6M149.5 130.1L164.6 130.4M200.7 131.2L217.6 131.6M235.8 132.0L249.1 132.2M268.9 132.7L281.3 133.0M307.1 133.5L319.0 133.8M357.1 134.6L372.4 135.0M400.7 135.6L418.1 136.0M452.6 136.7L471.7 137.1M496.9 137.7L511.3 138.0M537.2 138.6L548.6 138.8M574.2 139.4L592.1 139.8M34.3 126.0L51.8 126.4M83.2 127.0L94.6 127.2M119.2 127.7L133.7 128.0M166.2 128.7L178.4 128.9M204.1 129.5L220.2 129.8M256.1 130.5L275.2 130.9M306.7 131.6L319.5 131.8M354.8 132.5L374.7 132.9M404.6 133.6L419.2 133.9M448.0 134.4L460.5 134.7M494.5 135.4L515.2 135.8M544.4 136.4L562.4 136.8M599.5 137.5L601.0 137.6M27.7 124.6L40.7 124.8M59.7 125.2L73.3 125.4M104.7 126.0L122.6 126.4M147.8 126.9L167.9 127.2M193.9 127.7L209.5 128.0M229.5 128.4L250.0 128.8M270.3 129.2L290.2 129.6M320.8 130.1L337.4 130.5M368.4 131.0L382.1 131.3M422.0 132.1L442.7 132.5M480.2 133.2L497.2 133.5M517.2 133.9L536.3 134.2M560.4 134.7L580.2 135.1M25.7 123.4L44.9 123.8M67.0 124.1L83.4 124.4M102.7 124.8L114.2 125.0M136.1 125.4L156.8 125.7M198.4 126.5L215.9 126.8M241.2 127.2L258.8 127.6M295.2 128.2L310.1 128.5M342.7 129.0L361.6 129.4M379.3 129.7L392.4 129.9M421.8 130.5L434.4 130.7M461.7 131.2L478.4 131.5M500.1 131.8L516.3 132.1M540.4 132.6L557.1 132.9M583.0 133.3L600.3 133.6M48.5 122.8L61.1 123.0M104.3 123.7L121.2 124.0M151.4 124.5L166.6 124.8M200.8 125.3L218.6 125.6M256.4 126.3L274.9 126.6M305.5 127.1L326.2 127.4M366.2 128.1L385.6 128.4M414.1 128.9L429.5 129.2M462.2 129.7L482.1 130.0M513.7 130.6L530.0 130.8M559.2 131.3L579.0 131.7M51.5 121.9L69.7 122.2M112.3 122.9L130.5 123.2M164.9 123.7L183.3 124.0M209.7 124.4L226.6 124.7M246.6 125.0L259.0 125.2M289.2 125.7L305.3 125.9M334.2 126.4L345.9 126.6M382.9 127.2L399.1 127.4M423.7 127.8L437.9 128.0M466.7 128.5L480.2 128.7M500.2 129.0L520.1 129.3M564.5 130.0L582.1 130.3M98.8 121.8L117.7 122.1M142.4 122.5L160.8 122.8M195.1 123.3L214.9 123.6M236.2 123.9L255.0 124.2M277.0 124.5L293.4 124.8M338.3 125.4L349.5 125.6M374.9 126.0L388.9 126.2M416.5 126.6L428.3 126.8M471.7 127.4L490.8 127.7M520.3 128.1L535.0 128.4M569.8 128.9L581.4 129.0M600.8 129.3L601.0 129.3M130.7 121.5L150.9 121.8M197.6 122.5L213.4 122.7M238.2 123.1L252.2 123.3M297.4 123.9L317.2 124.2M341.8 124.5L361.0 124.8M390.0 125.2L405.8 125.4M429.6 125.8L449.3 126.1M496.5 126.7L509.7 126.9M546.6 127.4L559.6 127.6M136.4 120.9L148.6 121.1M189.1 121.6L203.3 121.8M248.9 122.4L268.4 122.7M308.5 123.2L321.0 123.4M360.6 123.9L380.8 124.2M413.1 124.6L425.1 124.8M451.0 125.1L465.1 125.3M505.1 125.9L518.2 126.1M542.9 126.4L556.3 126.6M595.0 127.1L601.0 127.2M192.4 121.0L212.1 121.2M249.4 121.7L262.8 121.9M291.6 122.3L311.7 122.5M351.3 123.0L365.1 123.2M403.9 123.7L416.0 123.9M465.0 124.5L480.4 124.7M515.9 125.1L532.2 125.3M553.3 125.6L570.3 125.8M598.5 126.2L601.0 126.2" clip-path="url(#flc)" stroke="#fff" stroke-width="1.100" fill="none" shape-rendering="crispEdges"/>
<g clip-path="url(#flc)" stroke="#fff" fill="none" stroke-width="1.250" shape-rendering="crispEdges">
<path d="M57.7 415.2L568.0 127.9" stroke-dasharray="1.400 2.400"/>
<path d="M0.0 275.0L511.0 125.6" stroke-dasharray="1.800 3"/>
<path d="M0.0 215.0L500.0 115.0" stroke-dasharray="2.200 3.600"/>
</g>
<!-- robot (scene coords) -->
<g>
<!-- shadows -->
<path d="M132 294l28 12 45 16 95 26 36 4 22-10-6-30-30-16-130-8z" fill="#0000d6"/>
<path d="M300 326l28 22 26-4 12-30-14-24z" fill="#0000c8"/>
<path d="M150 300l60 14 20 12-50 4z" fill="#0000d8" opacity=".6"/>
<!-- left wheel -->
<ellipse cx="150" cy="251.500" rx="19" ry="46" fill="#090909"/>
<polygon points="150,205.500 166,206.500 166,298.500 150,297.500" fill="#090909"/>
<ellipse cx="165" cy="252" rx="17.500" ry="46" fill="#131313"/>
<path d="M150 206.500a17.500 45 0 0 0 0 90" fill="none" stroke="#2a2a2a" stroke-width=".8"/>
<ellipse cx="170" cy="256" rx="12" ry="28" fill="#d8d8d8"/>
<ellipse cx="164" cy="243" rx="1.300" ry="3" fill="#f4f4f4"/><ellipse cx="164" cy="270" rx="1.300" ry="3" fill="#f4f4f4"/>
<!-- interior black -->
<polygon points="206,213 300,222 300,300 206,280" fill="#0a0a0a"/>
<!-- inner floor + lip -->
<polygon points="186,279 208,276 300,292 300,319 232,307 184,295" fill="#c2c2c2"/>
<polygon points="163.500,298.500 169,288.500 182,290 271,312 284,310 302,300 322,321 268,319.500 163.500,300" fill="#ffffff"/>
<!-- left frame -->
<polygon points="168.500,207 207,213 207,288 168.500,290.500" fill="#e9e9e9"/>
<polygon points="168.500,207 181,209 181,290.500 168.500,290" fill="#ffffff"/>
<polygon points="181,211 187.500,212 187.500,289 181,290.500" fill="#d9d9d9"/>
<polygon points="187.500,213 196,214 196,228 187.500,227.500" fill="#0a0a0a"/>
<polygon points="187.500,228 196,228 196,242 187.500,243" fill="#dcdcdc"/>
<polygon points="196,212.500 207,214 207,276 196,278" fill="#ffffff"/>
<polygon points="181,268 207,270 207,286 181,291" fill="#f4f4f4"/>
<!-- motors -->
<g transform="rotate(7.200 216 258)"><rect x="187" y="243.500" width="58" height="31" rx="6" fill="url(#mot)"/><path d="M211 245v28M219 245v28M226 245v28M233 246v26" stroke="#cdcdcd" stroke-width="1.400"/><ellipse cx="239" cy="259" rx="4" ry="9" fill="#e6e6e6" stroke="#c8c8c8"/></g>
<g transform="rotate(9 273 270)"><rect x="245" y="252" width="60" height="35" rx="7" fill="url(#mot)"/></g>
<!-- right pillar -->
<polygon points="282,218.500 296,220 296,312 282,310" fill="#ffffff"/>
<polygon points="296,220 304,218 304,306 296,312" fill="#d8d8d8"/>
<polygon points="333,210 349.500,206 349.500,224 333,224" fill="#ffffff"/>
<polygon points="321,216 333,214 333,222 321,223" fill="#0a0a0a"/>
<!-- right wheel -->
<ellipse cx="323" cy="273.600" rx="24.600" ry="53.500" fill="#090909" transform="rotate(-2 323 273.600)"/>
<polygon points="323,220.200 340,223.600 340,327.400 323,327" fill="#090909"/>
<ellipse cx="338.600" cy="275.500" rx="20" ry="52" fill="#131313" transform="rotate(-3 338.600 275.500)"/>
<path d="M321 222a21 52 0 0 0 0 104" fill="none" stroke="#262626" stroke-width=".8"/>
<ellipse cx="342" cy="275.500" rx="15.500" ry="34.500" fill="#d3d3d3" transform="rotate(-4 342 275.500)"/>
<ellipse cx="345" cy="275.500" rx="6" ry="9.500" fill="#0e0e0e"/>
<ellipse cx="344" cy="265.500" rx="2.600" ry="3" fill="#111"/>
<ellipse cx="350.500" cy="276" rx="3" ry="3.600" fill="#fff"/>
<g fill="#141414"><ellipse cx="347.400" cy="249.900" rx="2.400" ry="2.800"/><ellipse cx="340" cy="254.800" rx="2.400" ry="2.800"/><ellipse cx="352.300" cy="260.900" rx="2.300" ry="2.800"/><ellipse cx="334" cy="271.800" rx="2.400" ry="2.800"/><ellipse cx="334" cy="291.300" rx="2.400" ry="2.800"/><ellipse cx="339.500" cy="301.500" rx="2.400" ry="2.800"/><ellipse cx="347.700" cy="295.500" rx="2.400" ry="2.800"/></g>
<!-- top plate -->
<polygon points="167.800,207 199.600,206 296.600,214 369.600,198 369.600,201.500 296.600,223 199.600,215.500 168,210.500" fill="#ededed"/>
<polygon points="167.800,208 199.600,193.500 302.200,185.400 346,186.600 370.500,197 369.600,200 296.600,220 199.600,212.500 167.800,208" fill="#ffffff"/>
<!-- gray ring -->
<ellipse cx="250" cy="198.500" rx="52" ry="13" fill="url(#ring)"/>
<rect x="198" y="190" width="104" height="8.500" fill="url(#ring)"/>
<ellipse cx="250" cy="190" rx="52" ry="12" fill="#8a8a8a"/>
<ellipse cx="250" cy="189.500" rx="41" ry="8.500" fill="#5e5e5e"/>
<!-- posts and top bar -->
<rect x="202" y="118.500" width="13" height="74" fill="#7d7d7d"/>
<rect x="215" y="132" width="6.500" height="58" fill="#676767"/>
<rect x="281.500" y="118.500" width="18.500" height="82" fill="#717171"/>
<rect x="281.500" y="118.500" width="6" height="71" fill="#828282"/>
<rect x="202" y="118.500" width="98" height="15" fill="#7e7e7e"/>
<rect x="221.500" y="126" width="60" height="7.500" fill="#6b6b6b"/>
<!-- sensor bar -->
<rect x="204.500" y="134.500" width="58" height="16" rx="8" fill="#cbcbcb"/>
<path d="M254.500 134.500a8 8 0 0 1 0 16a4 8 0 0 0 0-16z" fill="#a6a6a6"/>
<!-- blue cylinder -->
<rect x="215.500" y="99" width="67" height="22" fill="url(#cyl)"/>
</g>
<!-- axes gizmo -->
<g><path d="M31 363v18" stroke="#7aa7ff" stroke-width="2.600"/><path d="M27 370l4-9 4 9z" fill="#7aa7ff"/><path d="M31 383.500h16" stroke="#14e014" stroke-width="3"/><path d="M45 379.500l7.500 4-7.500 4z" fill="#14e014"/><circle cx="27" cy="384" r="3.800" fill="#f00000"/></g>
</svg>
<!-- placement view -->
<div class="pane" style="left:825px;top:159px;width:261px;height:168px;background:#fafafa"></div>
<div class="tab" style="left:825px;top:132px;width:53.500px;height:28px;background:linear-gradient(#fdfdfd,#fafafa)"></div>
<div class="t j" style="left:837px;top:138px">配置</div>
<div class="t" style="left:836px;top:169px;letter-spacing:-0.6px">-----</div>
<div class="cb" style="left:1005px;top:172px;border-color:#cfcfcf;background:#f2f2f2"></div>
<div class="t j" style="left:1025px;top:170px;color:#bebebe">ロック</div>
<div class="t j" style="left:836px;top:202px;color:#bebebe">座標系：</div>
<div class="cmb dis" style="left:902px;top:199.5px;width:173px;height:24px;background:#f4f4f4;border-color:#d2d2d2"></div>
<div class="t" style="left:836px;top:233px">X</div>
<div class="sp l" style="left:853px;top:231px;width:60px;height:23px"><span style="line-height:20.500px;letter-spacing:-0.2px">0.000</span><div class="b"></div></div>
<div class="t" style="left:919.5px;top:233px">Y</div>
<div class="sp l" style="left:935px;top:231px;width:60px;height:23px"><span style="line-height:20.500px;letter-spacing:-0.2px">0.000</span><div class="b"></div></div>
<div class="t" style="left:1001.5px;top:233px">Z</div>
<div class="sp l" style="left:1016px;top:231px;width:60px;height:23px"><span style="line-height:20.500px;letter-spacing:-0.2px">0.000</span><div class="b"></div></div>
<div class="t" style="left:836px;top:264px">R</div>
<div class="sp l" style="left:853px;top:262px;width:60px;height:23px"><span style="line-height:20.500px">0.0</span><div class="b"></div></div>
<div class="t" style="left:919.5px;top:264px">P</div>
<div class="sp l" style="left:935px;top:262px;width:60px;height:23px"><span style="line-height:20.500px">0.0</span><div class="b"></div></div>
<div class="t" style="left:1001.5px;top:264px">Y</div>
<div class="sp l" style="left:1016px;top:262px;width:60px;height:23px"><span style="line-height:20.500px">0.0</span><div class="b"></div></div>
<div class="cb" style="left:836px;top:299.5px;border-color:#cfcfcf;background:#f2f2f2"></div>
<div class="t j" style="left:856px;top:297px;width:127px;overflow:hidden;color:#c4c4c4">ローカル座標系を使用</div>
<div class="cb" style="left:990px;top:299.5px;border-color:#cfcfcf;background:#f2f2f2"></div>
<div class="t j" style="left:1009px;top:297px;color:#c4c4c4">個別回転</div>
<div class="a" style="left:949px;top:329px;width:15px;height:1px;background-image:linear-gradient(90deg,#bbb 1px,transparent 1px);background-size:3px 1px"></div>
<!-- link position view -->
<div class="pane" style="left:825px;top:359px;width:261px;height:230px;background:#fafafa"></div>
<div class="tab" style="left:825px;top:333px;width:144px;height:27px;background:linear-gradient(#fdfdfd,#fafafa)"></div>
<div class="t j" style="left:838px;top:338px">リンクポジション</div>
<!-- message view -->
<div class="pane" style="left:216.5px;top:609px;width:871px;height:177.500px"></div>
<div class="tabi" style="left:316px;top:585px;width:147px;height:25px"></div>
<div class="tab" style="left:216.5px;top:582px;width:99.500px;height:28px;background:linear-gradient(#f8f8f8,#fff)"></div>
<div class="t j" style="left:229px;top:588px">メッセージ</div>
<div class="t j" style="left:327px;top:588px">Pythonコンソール</div>
<div class="a" style="left:512px;top:579px;width:15px;height:1px;background-image:linear-gradient(90deg,#bbb 1px,transparent 1px);background-size:3px 1px"></div>
<div class="a" style="left:0;top:611px;width:1086px;height:174px;overflow:hidden;font-family:'Liberation Mono','Noto Sans CJK JP',monospace;font-size:15px;color:#111">
<div class="a" style="left:301.5px;top:1.0px;line-height:20px;white-space:pre"><span style="font-size:13px;letter-spacing:-0.3px">P gain: 0.5</span></div>
<div class="a" style="left:301.5px;top:22.9px;line-height:20px;white-space:pre"><span style="font-size:13px;letter-spacing:-0.3px">D gain: 0.1</span></div>
<div class="a" style="left:222px;top:44.8px;line-height:20px;white-space:pre"><span style="font-size:13px;letter-spacing:-0.3px">Creating ControllerManager</span></div>
<div class="a" style="left:222px;top:66.7px;line-height:20px;white-space:pre"><span style="font-size:13px;letter-spacing:-0.3px">ROS2Control has successfully been initialized</span></div>
<div class="a" style="left:222px;top:88.6px;line-height:20px;white-space:pre"><span style="font-size:13px;letter-spacing:-0.3px">AISTSimulator</span>によるシミュレーションを開始しました<span style="font-size:13px;letter-spacing:-0.3px">.</span></div>
<div class="a" style="left:222px;top:110.5px;line-height:20px;white-space:pre"><span style="font-size:13px;letter-spacing:-0.3px">AISTSimulator</span>によるシミュレーションが<span style="font-size:13px;letter-spacing:-0.3px">56.218</span>秒時点で終了しました。</div>
<div class="a" style="left:222px;top:132.4px;line-height:20px;white-space:pre">計算時間<span style="font-size:13px;letter-spacing:-0.3px">: 56.217 [s], </span>計算時間<span style="font-size:13px;letter-spacing:-0.3px"> / </span>シミュレーション時間<span style="font-size:13px;letter-spacing:-0.3px"> = 0.999</span></div>
</div>
</div><!-- /chor -->
<!-- rqt window -->
<div class="a" style="left:691px;top:371px;width:600px;height:523px;border-radius:11px 11px 0 0;box-shadow:0 4px 16px rgba(0,0,0,.5),0 0 0 1px rgba(0,0,0,.2)"></div>
<div class="win" id="rqt" style="left:691px;top:371px;width:600px;height:523px;border-radius:11px 11px 0 0;background:#efefef">
<div class="a" style="left:0;top:0;width:600px;height:37px;background:#ebebeb;border-bottom:1px solid #cdcdcd;border-top:1px solid #fbfbfb;border-radius:11px 11px 0 0"></div>
<div class="t" style="left:0;width:600px;top:8px;text-align:center;font-weight:bold;color:#2e2e2e;letter-spacing:0.08px">control.perspective - rqt</div>
<div class="a" style="left:503px;top:7px;width:22px;height:22px;border-radius:11px;background:#dbdbdb"></div>
<div class="a" style="left:537px;top:7px;width:22px;height:22px;border-radius:11px;background:#dbdbdb"></div>
<div class="a" style="left:571px;top:7px;width:22px;height:22px;border-radius:11px;background:#dbdbdb"></div>
<svg class="a" style="left:500px;top:6px" width="96" height="24" viewBox="0 0 96 24" fill="none" stroke="#2e2e2e" stroke-width="1.300"><path d="M10 14.500h8"/><rect x="44.200" y="8.200" width="7.600" height="7.600"/><path d="M78 8l8 8M86 8l-8 8"/></svg>
<div class="a" style="left:0;top:58px;width:600px;height:1px;background:#d9d9d9"></div>
<div class="t" style="left:10.5px;top:38px"><u>F</u>ile</div>
<div class="t" style="left:49px;top:38px"><u>P</u>lugins</div>
<div class="t" style="left:113.3px;top:38px"><u>R</u>unning</div>
<div class="t" style="left:184px;top:38px">P<u>e</u>rspectives</div>
<div class="t" style="left:283.5px;top:38px"><u>H</u>elp</div>
<div class="t" style="left:17px;top:62.5px;letter-spacing:0.2px">Robot Steering</div>
<div class="a" style="left:193.5px;top:64px;width:16px;height:16px;border:1px solid #bcbcbc;border-radius:2px;background:#dedede"></div>
<div class="t" style="left:195.8px;top:62.5px;font-size:15.500px">D</div>
<svg class="a" style="left:210.0px;top:63.5px" width="34" height="17" viewBox="0 0 34 17"><g fill="none" stroke="#4380cc" stroke-width="3.200"><path d="M2.300 7.300a5.600 5.600 0 0 1 9.800-2.800"/><path d="M13 9.700a5.600 5.600 0 0 1-9.800 2.800"/></g><path d="M9 6l6 .500-.500-6zM6.300 11l-6-.500.500 6z" fill="#4380cc"/><g fill="none" stroke="#dbe8f8" stroke-width=".9"><path d="M2.600 6.800a5.600 5.600 0 0 1 8.600-2.600"/><path d="M12.700 10.200a5.600 5.600 0 0 1-8.600 2.600"/></g><circle cx="24.800" cy="8.500" r="7.700" fill="#fff" stroke="#2f5fa8" stroke-width=".900"/><circle cx="24.800" cy="8.500" r="6.200" fill="#2f62ae"/><path d="M19 7a6 6 0 0 1 11.600 0a9 5 0 0 0-11.600 0z" fill="#6f9ad6" opacity=".7"/><text x="24.800" y="13" font-family="Liberation Sans,sans-serif" font-weight="bold" font-size="12.500" fill="#fff" text-anchor="middle">?</text></svg>
<div class="t" style="left:255.5px;top:62px;font-weight:bold">-</div>
<div class="t" style="left:268.0px;top:62.5px;font-size:14.500px">O</div>
<svg class="a" style="left:281.8px;top:64px" width="16" height="16" viewBox="0 0 16 16"><circle cx="8" cy="8" r="8" fill="#cc1236"/><path d="M4.800 4.800l6.400 6.400M11.200 4.800l-6.400 6.400" stroke="#fff" stroke-width="1.700"/></svg>
<div class="t" style="left:321px;top:62.5px;letter-spacing:0.39px">Joint trajectory controller</div>
<div class="a" style="left:496.5px;top:64px;width:16px;height:16px;border:1px solid #bcbcbc;border-radius:2px;background:#dedede"></div>
<div class="t" style="left:498.8px;top:62.5px;font-size:15.500px">D</div>
<svg class="a" style="left:513.0px;top:63.5px" width="34" height="17" viewBox="0 0 34 17"><g fill="none" stroke="#4380cc" stroke-width="3.200"><path d="M2.300 7.300a5.600 5.600 0 0 1 9.800-2.800"/><path d="M13 9.700a5.600 5.600 0 0 1-9.800 2.800"/></g><path d="M9 6l6 .500-.500-6zM6.300 11l-6-.500.500 6z" fill="#4380cc"/><g fill="none" stroke="#dbe8f8" stroke-width=".9"><path d="M2.600 6.800a5.600 5.600 0 0 1 8.600-2.600"/><path d="M12.700 10.200a5.600 5.600 0 0 1-8.600 2.600"/></g><circle cx="24.800" cy="8.500" r="7.700" fill="#fff" stroke="#2f5fa8" stroke-width=".900"/><circle cx="24.800" cy="8.500" r="6.200" fill="#2f62ae"/><path d="M19 7a6 6 0 0 1 11.600 0a9 5 0 0 0-11.600 0z" fill="#6f9ad6" opacity=".7"/><text x="24.800" y="13" font-family="Liberation Sans,sans-serif" font-weight="bold" font-size="12.500" fill="#fff" text-anchor="middle">?</text></svg>
<div class="t" style="left:558.5px;top:62px;font-weight:bold">-</div>
<div class="t" style="left:571.0px;top:62.5px;font-size:14.500px">O</div>
<svg class="a" style="left:584.8px;top:64px" width="16" height="16" viewBox="0 0 16 16"><circle cx="8" cy="8" r="8" fill="#cc1236"/><path d="M4.800 4.800l6.400 6.400M11.200 4.800l-6.400 6.400" stroke="#fff" stroke-width="1.700"/></svg>
<svg class="a" style="left:0.5px;top:63px" width="16" height="18" viewBox="0 0 16 18"><rect x=".500" y="5.500" width="14" height="11" rx="1" fill="#f6f6f6" stroke="#9a9a9a"/><rect x="7" y="7" width="3.500" height="5" fill="#fff" stroke="#7a7a7a" stroke-width=".800"/><circle cx="3" cy="11.500" r="1.400" fill="#e06a10"/><circle cx="8.500" cy="4.500" r="3.800" fill="#e8851a"/><circle cx="8" cy="4" r="1.800" fill="#f4a640"/></svg>
<svg class="a" style="left:304.8px;top:64px" width="16" height="16" viewBox="0 0 16 16"><rect x=".500" y=".500" width="15" height="15" rx="1.500" fill="#1e8c3c" stroke="#14702f"/><path d="M4 1v14M8 1v14M12 1v14M1 4h14M1 8h14M1 12h14" stroke="#2a9e4c" stroke-width=".6"/><path d="M1.500 10h1.500l1.500-4.500 1.500 3 1.500-5.500 2 6 1.500-2.500 1.500 2h2" fill="none" stroke="#8fe0a4" stroke-width="1.200"/></svg>
<div class="a" style="left:9px;top:89px;width:103px;height:25px;border:1px solid #bcbcbc;border-radius:3px;background:#fff"></div>
<div class="t" style="left:13px;top:91.5px">/cmd_vel</div>
<div class="cb" style="left:118px;top:94px"></div>
<div class="t" style="left:137.5px;top:91.5px;letter-spacing:0.4px">stamped</div>
<div class="btn" style="left:209px;top:89px;width:80px;height:25px;line-height:24px">Stop</div>
<div class="btn" style="left:101px;top:120px;width:30px;height:25px;line-height:23px">+</div>
<div class="btn" style="left:101px;top:249px;width:30px;height:25px;line-height:23px">0</div>
<div class="btn" style="left:101px;top:378px;width:30px;height:25px;line-height:23px">-</div>
<div class="sp" style="left:168px;top:121px;width:69px;height:24px"><span style="text-align:left;padding-left:5px;line-height:22px">1.00</span><div class="b"></div></div>
<div class="sp" style="left:168px;top:378px;width:69px;height:24px"><span style="text-align:left;padding-left:5px;line-height:22px">-1.00</span><div class="b"></div></div>
<div class="t" style="left:168px;top:251.5px">0.0 m/s</div>
<div class="a" style="left:147px;top:121px;width:5px;height:282px;border:1px solid #b9b9b9;border-radius:2.500px;background:#d9d9d9"></div>
<div class="a" style="left:147px;top:266px;width:5px;height:136px;border:1px solid #2f7fb8;border-radius:2.500px;background:#3d94d6"></div>
<div class="a" style="left:143px;top:255.5px;width:12px;height:12px;border:1px solid #a9a9a9;border-radius:3px;background:linear-gradient(#fff,#f0f0f0)"></div>
<svg class="a" style="left:0;top:0" width="600" height="523" viewBox="0 0 600 523"><path d="M138.5 127.5h3M157 127.5h3.5M138.5 140.5h3M157 140.5h3.5M138.5 154.5h3M157 154.5h3.5M138.5 168.5h3M157 168.5h3.5M138.5 181.5h3M157 181.5h3.5M138.5 194.5h3M157 194.5h3.5M138.5 208.5h3M157 208.5h3.5M138.5 222.5h3M157 222.5h3.5M138.5 235.5h3M157 235.5h3.5M138.5 248.5h3M157 248.5h3.5M138.5 262.5h3M157 262.5h3.5M138.5 276.5h3M157 276.5h3.5M138.5 289.5h3M157 289.5h3.5M138.5 302.5h3M157 302.5h3.5M138.5 316.5h3M157 316.5h3.5M138.5 330.5h3M157 330.5h3.5M138.5 343.5h3M157 343.5h3.5M138.5 356.5h3M157 356.5h3.5M138.5 370.5h3M157 370.5h3.5M138.5 384.5h3M157 384.5h3.5M138.5 397.5h3M157 397.5h3.5" stroke="#2a6c9c" stroke-width="1" fill="none" shape-rendering="crispEdges"/>
<path d="M16.5 424v4M21.5 424v3M25.5 424v3M30.5 424v3M34.5 424v3M39.5 424v3M43.5 424v3M47.5 424v3M52.5 424v3M56.5 424v3M61.5 424v3M65.5 424v3M69.5 424v3M74.5 424v3M78.5 424v3M83.5 424v3M87.5 424v3M92.5 424v3M96.5 424v3M100.5 424v3M105.5 424v3M109.5 424v3M114.5 424v3M118.5 424v3M122.5 424v3M127.5 424v3M131.5 424v3M136.5 424v3M140.5 424v3M144.5 424v3M149.5 424v4M153.5 424v3M158.5 424v3M162.5 424v3M167.5 424v3M171.5 424v3M175.5 424v3M180.5 424v3M184.5 424v3M189.5 424v3M193.5 424v3M197.5 424v3M202.5 424v3M206.5 424v3M211.5 424v3M215.5 424v3M220.5 424v3M224.5 424v3M228.5 424v3M233.5 424v3M237.5 424v3M242.5 424v3M246.5 424v3M250.5 424v3M255.5 424v3M259.5 424v3M264.5 424v3M268.5 424v3M272.5 424v3M277.5 424v3M281.5 424v4" stroke="#aaaaaa" stroke-width="1" fill="none" shape-rendering="crispEdges"/>
<path d="M596 520h1v1h-1zM596 517h1v1h-1zM596 514h1v1h-1zM596 511h1v1h-1zM593 520h1v1h-1zM593 517h1v1h-1zM593 514h1v1h-1zM590 520h1v1h-1zM590 517h1v1h-1zM587 520h1v1h-1z" fill="#b5b5b5"/></svg>
<div class="a" style="left:10px;top:412px;width:278px;height:5px;border:1px solid #b9b9b9;border-radius:2.500px;background:#d9d9d9"></div>
<div class="a" style="left:153px;top:412px;width:135px;height:5px;border:1px solid #2f7fb8;border-radius:2.500px;background:#3d94d6"></div>
<div class="a" style="left:143px;top:408.5px;width:12px;height:12px;border:1px solid #a9a9a9;border-radius:3px;background:linear-gradient(#fff,#f0f0f0)"></div>
<div class="btn" style="left:9px;top:435px;width:30px;height:25px;line-height:23px">&lt;</div>
<div class="btn" style="left:134px;top:435px;width:30px;height:25px;line-height:23px">0</div>
<div class="btn" style="left:258.5px;top:435px;width:30px;height:25px;line-height:23px">&gt;</div>
<div class="sp" style="left:9px;top:466.5px;width:64.5px;height:25px"><span style="text-align:left;padding-left:5px;line-height:23px">3.00</span><div class="b"></div></div>
<div class="sp" style="left:220px;top:466.5px;width:68.5px;height:25px"><span style="text-align:left;padding-left:5px;line-height:23px">-3.00</span><div class="b"></div></div>
<div class="t" style="left:117px;top:469.5px">0.0 rad/s</div>
<div class="a" style="left:302px;top:272px;width:1px;height:16px;background-image:linear-gradient(#bbb 1px,transparent 1px);background-size:1px 3px"></div>
<div class="t" style="left:313.5px;top:89px">ns:</div>
<div class="gb" style="left:314px;top:110px;width:277px;height:130.500px"></div>
<div class="t" style="left:325px;top:119.5px;letter-spacing:0.2px">controller manager ns</div>
<div class="t" style="left:481px;top:119.5px;letter-spacing:0.6px">controller</div>
<div class="cmb" style="left:325px;top:144px;width:150px;height:25px"></div>
<div class="cmb" style="left:481px;top:144px;width:98px;height:25px"></div>
<div class="btn" style="left:422px;top:175px;width:60px;height:54px;border-color:#b5b5b5"></div>
<svg class="a" style="left:431px;top:181px" width="42" height="42" viewBox="0 0 42 42"><defs><radialGradient id="pw" cx=".5" cy=".35" r=".7"><stop offset="0" stop-color="#f4505a"/><stop offset=".6" stop-color="#e8202e"/><stop offset="1" stop-color="#d8101e"/></radialGradient></defs><circle cx="21" cy="21" r="19.500" fill="url(#pw)"/><path d="M16 14.500a8.500 8.500 0 1 0 10 0" fill="none" stroke="#f4eaea" stroke-width="2.800" stroke-linecap="round"/><path d="M21 11v10" stroke="#f4eaea" stroke-width="2.800" stroke-linecap="round"/></svg>
<div class="t" style="left:313px;top:247.5px;letter-spacing:0.6px">joints</div>
<div class="gb" style="left:314px;top:268.5px;width:277px;height:129px"></div>
<div class="a" style="left:325px;top:279px;width:254px;height:107px;background:#efefef"></div>
<div class="t" style="left:313.5px;top:404px;letter-spacing:-0.1px">speed scaling</div>
<div class="gb" style="left:314px;top:425px;width:277px;height:67px"></div>
<div class="a" style="left:335px;top:455.5px;width:162.500px;height:5px;border:1px solid #bdbdbd;border-radius:2.500px;background:#dedede"></div>
<div class="a" style="left:335px;top:455.5px;width:80px;height:5px;border:1px solid #a4a4a4;border-radius:2.500px;background:#b4b4b4"></div>
<div class="a" style="left:408.5px;top:452px;width:12px;height:12px;border:1px solid #b5b5b5;border-radius:3px;background:linear-gradient(#fff,#f0f0f0)"></div>
<div class="sp d" style="left:504px;top:446px;width:66px;height:24px;background:#efefef;border-color:#bdbdbd"><span style="text-align:left;padding-left:5px;color:#c6c6c6">50%</span><div class="b" style="background:#f6f6f6"></div></div>
</div><!-- /rqt -->
</body></html>
